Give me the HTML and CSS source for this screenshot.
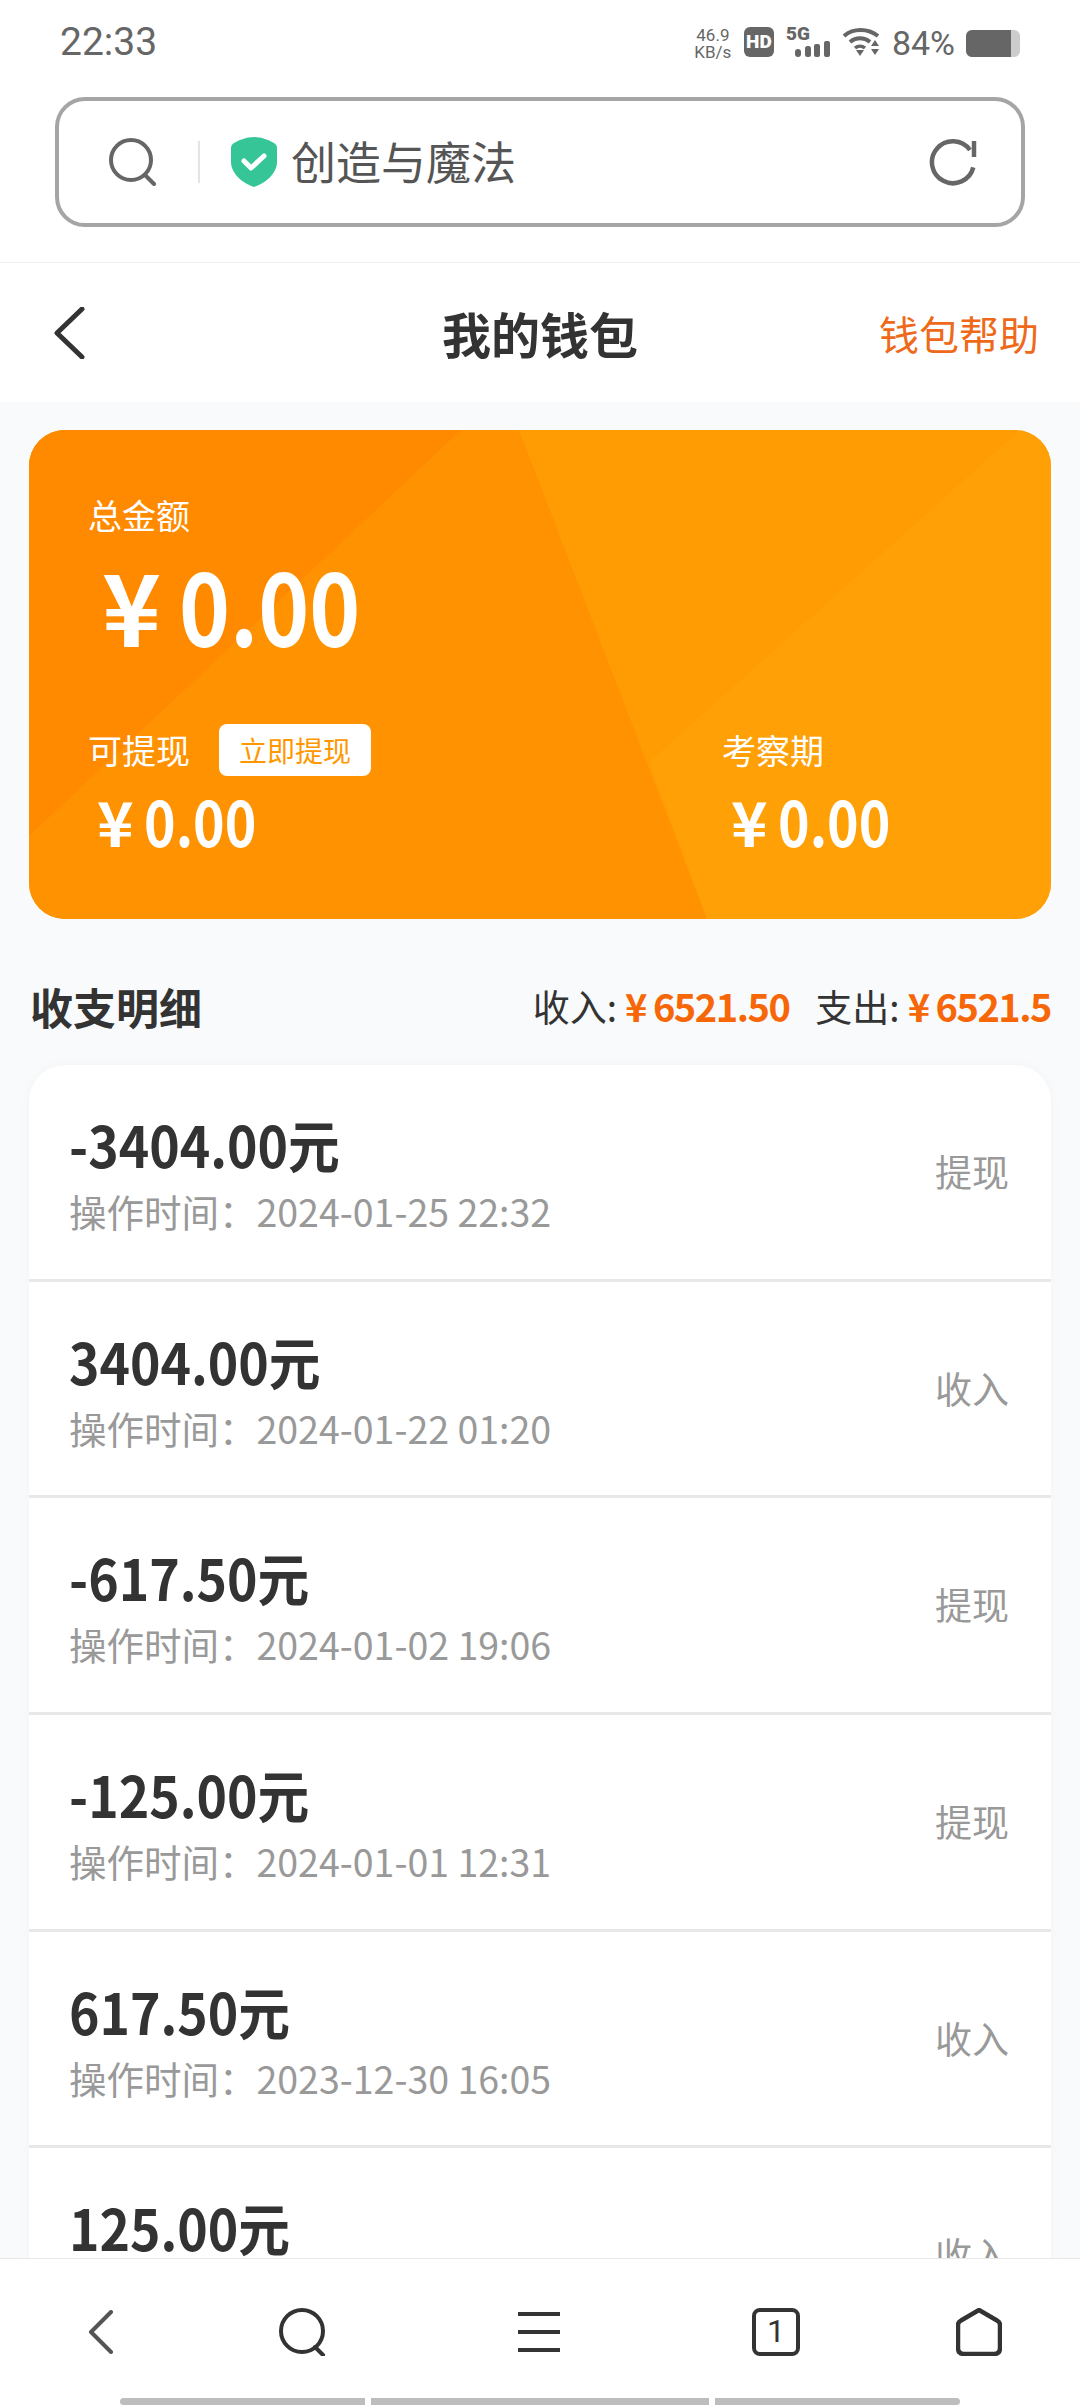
FILE: index.html
```html
<!DOCTYPE html>
<html lang="zh-CN">

<head>
    <meta charset="UTF-8">
    <meta name="viewport" content="width=device-width, initial-scale=1.0">
    <title>我的钱包</title>
    <link rel="stylesheet" href="styles.css">
</head>

<body>
    <div class="browser-top">
        <div class="status-bar">
            <span class="status-time">22:33</span>
            <div class="status-icons">
                <div class="net-speed"><span>46.9</span><span>KB/s</span></div>
                <span class="hd-badge">HD</span>
                <div class="signal">
                    <span class="signal-label">5G</span>
                    <svg width="35" height="16" viewBox="0 0 35 16">
                        <rect x="0" y="8" width="6" height="8" rx="3" fill="#666" />
                        <rect x="10" y="5" width="6" height="11" rx="2.5" fill="#666" />
                        <rect x="19" y="3" width="6" height="13" rx="2" fill="#666" />
                        <rect x="29" y="0" width="6" height="16" rx="2" fill="#666" />
                    </svg>
                </div>
                <svg class="wifi-icon" width="36" height="29" viewBox="0 0 36 29">
                    <path d="M1 9 C10 1 25 1 35 9" fill="none" stroke="#666" stroke-width="4" />
                    <path d="M7 15 C13 10 21 10 27 15" fill="none" stroke="#666" stroke-width="4" />
                    <path d="M12 21 C15 18.500 19 18.500 22 21" fill="none" stroke="#666" stroke-width="3.500" />
                    <path d="M13 23 H21 L17 29 Z" fill="#666" />
                    <path d="M32 13 L36 19 H28 Z M28 22 H36 L32 28 Z" fill="#666" />
                </svg>
                <span class="battery-text">84%</span>
                <div class="battery">
                    <div class="battery-level"></div>
                </div>
            </div>
        </div>

        <div class="url-wrap">
            <div class="url-bar">
                <svg width="48" height="48" viewBox="0 0 48 48">
                    <circle cx="22" cy="22" r="20" fill="none" stroke="#666" stroke-width="4" />
                    <path d="M36 37 L45 46" stroke="#666" stroke-width="4" stroke-linecap="round" />
                </svg>
                <span class="url-divider"></span>
                <svg class="shield" width="46" height="50" viewBox="0 0 46 50">
                    <path d="M23 0 C30 0 38 3 43 6 C45 7 46 9 46 11 V25 C46 37 33 47 23 50 C13 47 0 37 0 25 V11 C0 9 1 7 3 6 C8 3 16 0 23 0 Z" fill="#36c596" />
                    <path d="M13 24 L20 31 L33 19" fill="none" stroke="#fff" stroke-width="5" stroke-linecap="round" stroke-linejoin="round" />
                </svg>
                <span class="url-title">创造与魔法</span>
                <svg class="reload" width="48" height="48" viewBox="0 0 48 48">
                    <path d="M44.300 29.400 A21 21 0 1 1 41 12" fill="none" stroke="#666" stroke-width="4.500" />
                    <path d="M45 3 V19" fill="none" stroke="#666" stroke-width="4.500" />
                </svg>
            </div>
        </div>
    </div>

    <div class="nav-bar">
        <svg class="nav-back" width="32" height="52" viewBox="0 0 32 52">
            <path d="M29 2 L4 26 L29 50" fill="none" stroke="#333" stroke-width="5" stroke-linecap="round" stroke-linejoin="round" />
        </svg>
        <h1 class="nav-title">我的钱包</h1>
        <span class="nav-help">钱包帮助</span>
    </div>

    <main class="content">
        <section class="wallet-card">
            <svg class="card-bg" viewBox="0 0 1022 489" preserveAspectRatio="none">
                <rect width="1022" height="489" fill="#ff9c03" />
                <polygon points="991,0 1022,0 1022,489 678,489 620,332" fill="#ffa006" />
                <polygon points="0,0 490,0 678,489 0,489" fill="#ff9200" />
                <polygon points="0,0 432,0 0,406" fill="#ff8a00" />
            </svg>
            <div class="card-body">
                <div class="card-label">总金额</div>
                <div class="card-total"><span class="yen">¥</span><span class="card-num">0.00</span></div>
                <div class="card-cols">
                    <div class="card-col">
                        <div class="card-label-row">
                            <span class="card-label">可提现</span>
                            <button class="withdraw-btn">立即提现</button>
                        </div>
                        <div class="card-sub"><span class="yen-small">¥</span><span class="card-num">0.00</span></div>
                    </div>
                    <div class="card-col">
                        <div class="card-label-row">
                            <span class="card-label">考察期</span>
                        </div>
                        <div class="card-sub"><span class="yen-small">¥</span><span class="card-num">0.00</span></div>
                    </div>
                </div>
            </div>
        </section>

        <div class="list-head">
            <h2 class="list-title">收支明细</h2>
            <div class="list-sum">
                <span>收入:</span><b class="sum-value"><span class="sum-yen">¥</span>6521.50</b>
                <span class="sum-gap">支出:</span><b class="sum-value"><span class="sum-yen">¥</span>6521.5</b>
            </div>
        </div>

        <div class="record-list">
            <div class="record">
                <div>
                    <div class="record-amount">-3404.00元</div>
                    <div class="record-time">操作时间：2024-01-25 22:32</div>
                </div>
                <span class="record-type">提现</span>
            </div>
            <div class="record">
                <div>
                    <div class="record-amount">3404.00元</div>
                    <div class="record-time">操作时间：2024-01-22 01:20</div>
                </div>
                <span class="record-type">收入</span>
            </div>
            <div class="record">
                <div>
                    <div class="record-amount">-617.50元</div>
                    <div class="record-time">操作时间：2024-01-02 19:06</div>
                </div>
                <span class="record-type">提现</span>
            </div>
            <div class="record">
                <div>
                    <div class="record-amount">-125.00元</div>
                    <div class="record-time">操作时间：2024-01-01 12:31</div>
                </div>
                <span class="record-type">提现</span>
            </div>
            <div class="record">
                <div>
                    <div class="record-amount">617.50元</div>
                    <div class="record-time">操作时间：2023-12-30 16:05</div>
                </div>
                <span class="record-type">收入</span>
            </div>
            <div class="record">
                <div>
                    <div class="record-amount">125.00元</div>
                </div>
                <span class="record-type">收入</span>
            </div>
        </div>
    </main>

    <div class="bottom-bar">
        <div class="bottom-icons">
            <svg width="26" height="44" viewBox="0 0 26 44">
                <path d="M23 2 L3 22 L23 42" fill="none" stroke="#555" stroke-width="4" stroke-linecap="round" stroke-linejoin="round" />
            </svg>
            <svg width="48" height="48" viewBox="0 0 48 48">
                <circle cx="23" cy="23" r="21" fill="none" stroke="#333" stroke-width="4" />
                <path d="M36 39 L44 47" stroke="#333" stroke-width="4" stroke-linecap="round" />
            </svg>
            <svg width="44" height="42" viewBox="0 0 44 42">
                <path d="M1 3 H43 M1 21 H43 M1 39 H43" stroke="#333" stroke-width="4" />
            </svg>
            <div class="tab-count">1</div>
            <svg width="46" height="48" viewBox="0 0 46 48">
                <path d="M23 2 L41 12.500 Q44 14 44 17 V40 Q44 46 38 46 H8 Q2 46 2 40 V17 Q2 14 5 12.500 Z" fill="none" stroke="#333" stroke-width="4.500" stroke-linejoin="round" />
            </svg>
        </div>
        <div class="gesture">
            <span class="gesture-a"></span>
            <span class="gesture-b"></span>
            <span class="gesture-c"></span>
        </div>
    </div>
</body>

</html>
```

FILE: styles.css
```css
* {
    box-sizing: border-box;
}

html,
body {
    margin: 0;
    padding: 0;
}

body {
    width: 1080px;
    height: 2408px;
    display: flex;
    flex-direction: column;
    overflow: hidden;
    background-color: #f8fafc;
    color: #333;
    font-family: "Noto Sans CJK SC", "Noto Sans", sans-serif;
}

/* browser chrome */
.browser-top {
    background-color: #fff;
}

.status-bar {
    height: 97px;
    padding: 20px 60px 0;
    display: flex;
    justify-content: space-between;
    align-items: flex-start;
    color: #666;
    font-family: Roboto, sans-serif;
}

.status-time {
    font-size: 39px;
    line-height: 44px;
}

.status-icons {
    display: flex;
    align-items: flex-start;
    margin-top: 7px;
}

.net-speed {
    width: 40px;
    display: flex;
    flex-direction: column;
    align-items: center;
    font-size: 17px;
    line-height: 17px;
}

.hd-badge {
    width: 30px;
    height: 30px;
    margin-left: 11px;
    border-radius: 6px;
    background-color: #666;
    color: #fff;
    font-size: 19px;
    font-weight: 900;
    line-height: 30px;
    text-align: center;
}

.signal {
    width: 44px;
    margin-left: 12px;
    display: flex;
    flex-direction: column;
    align-items: flex-start;
}

.signal svg {
    margin-left: 9px;
}

.signal-label {
    font-size: 19px;
    font-weight: 900;
    line-height: 14px;
}

.wifi-icon {
    margin-left: 13px;
}

.battery-text {
    margin-left: 13px;
    font-size: 34px;
    line-height: 32px;
}

.battery {
    width: 54px;
    height: 27px;
    margin-left: 11px;
    margin-top: 3px;
    border-radius: 6px;
    background-color: #ccc;
    overflow: hidden;
}

.battery-level {
    width: 84%;
    height: 100%;
    background-color: #666;
}

.url-wrap {
    height: 166px;
    padding: 0 55px;
    border-bottom: 1px solid #f0f0f0;
}

.url-bar {
    height: 130px;
    padding: 0 44px 0 50px;
    display: flex;
    align-items: center;
    border: 4px solid #a5a5a5;
    border-radius: 30px;
}

.url-divider {
    width: 2px;
    height: 42px;
    margin-left: 41px;
    background-color: #e4e4e4;
}

.shield {
    margin-left: 31px;
}

.url-title {
    margin: 0 0 3px 14px;
    font-size: 45px;
    color: #555;
}

.reload {
    margin-left: auto;
}

/* page header */
.nav-bar {
    height: 139px;
    padding: 0 41px 0 53px;
    display: flex;
    align-items: center;
    justify-content: space-between;
    background-color: #fff;
}

.nav-title {
    margin: 0 0 0 357px;
    font-size: 49px;
    font-weight: 700;
}

.nav-help {
    margin-left: auto;
    font-size: 40px;
    color: #ee6a1a;
}

.content {
    flex: 1;
    min-height: 0;
    overflow: hidden;
    padding: 28px 29px 0;
}

/* wallet card */
.wallet-card {
    position: relative;
    height: 489px;
    border-radius: 36px;
    overflow: hidden;
    color: #fff;
}

.card-bg {
    position: absolute;
    top: 0;
    left: 0;
    width: 100%;
    height: 100%;
}

.card-body {
    position: relative;
    padding: 60px 59px 0;
}

.card-label {
    font-size: 34px;
    line-height: 50px;
}

.card-total {
    margin-top: 4px;
    padding-left: 14px;
    font-size: 100px;
    font-weight: 700;
    line-height: 120px;
}

.yen {
    margin-right: 18px;
}

.card-num {
    display: inline-block;
    transform: scaleX(0.865);
    transform-origin: left center;
}

.card-cols {
    display: flex;
    margin-top: 60px;
}

.card-col {
    flex: none;
    width: 634px;
}

.card-label-row {
    height: 52px;
    display: flex;
    align-items: center;
}

.withdraw-btn {
    width: 152px;
    height: 52px;
    margin-left: 29px;
    padding: 0;
    border: none;
    border-radius: 8px;
    background-color: #fff;
    color: #ff9800;
    font-family: inherit;
    font-size: 28px;
}

.card-sub {
    margin-top: 6px;
    padding-left: 9px;
    font-size: 62px;
    font-weight: 700;
    line-height: 76px;
}

.yen-small {
    margin-right: 10px;
}

/* records */
.list-head {
    height: 146px;
    padding: 30px 0 3px;
    display: flex;
    align-items: center;
    justify-content: space-between;
}

.list-title {
    margin: 0;
    padding-left: 1px;
    font-size: 43px;
    font-weight: 700;
}

.list-sum {
    display: flex;
    align-items: center;
    font-size: 37px;
}

.sum-value {
    margin-left: 8px;
    font-size: 38px;
    font-weight: 700;
    letter-spacing: -1.500px;
    color: #f76707;
}

.sum-yen {
    margin-right: 7px;
}

.sum-gap {
    margin-left: 26px;
}

.record-list {
    border-radius: 36px 36px 0 0;
    background-color: #fff;
    box-shadow: 0 0 12px rgba(0, 0, 0, 0.03);
}

.record {
    height: 216.700px;
    padding: 48px 42px 0 40px;
    display: flex;
    align-items: flex-start;
    justify-content: space-between;
    border-bottom: 3px solid #e8e8e8;
}

.record-amount {
    font-size: 57px;
    font-weight: 700;
    line-height: 60px;
    transform: scaleX(0.907);
    transform-origin: left center;
}

.record-time {
    margin-top: 16px;
    font-size: 37.500px;
    line-height: 44px;
    color: #999;
}

.record-type {
    margin-top: 36px;
    font-size: 37px;
    line-height: 44px;
    color: #999;
}

/* browser bottom bar */
.bottom-bar {
    height: 150px;
    padding-top: 49px;
    background-color: #fff;
    border-top: 1px solid #e8e8e8;
}

.bottom-icons {
    height: 48px;
    display: grid;
    grid-template-columns: 202px 202px 270px 204px 202px;
    align-items: center;
    justify-items: center;
}

.tab-count {
    width: 48px;
    height: 48px;
    border: 4.500px solid #333;
    border-radius: 8px;
    font-family: Roboto, sans-serif;
    font-size: 32px;
    line-height: 39px;
    text-align: center;
}

.gesture {
    height: 7px;
    margin-top: 42px;
    padding-left: 120px;
    display: flex;
    gap: 6px;
}

.gesture span {
    background-color: #bdbdbd;
}

.gesture-a {
    width: 245px;
    border-radius: 4px 0 0 4px;
}

.gesture-b {
    width: 338px;
}

.gesture-c {
    width: 245px;
    border-radius: 0 4px 4px 0;
}
```
